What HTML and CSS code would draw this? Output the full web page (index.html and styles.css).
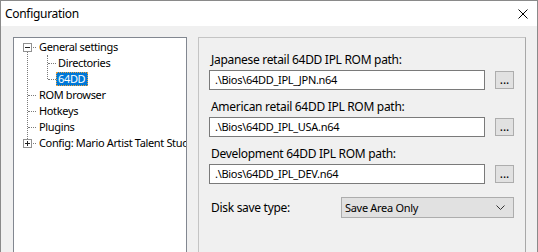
FILE: index.html
```html
<!DOCTYPE html>
<html>
<head>
<meta charset="utf-8">
<link rel="stylesheet" href="styles.css">
</head>
<body>
<div class="window">
  <div class="titlebar">
    <span class="title">Configuration</span>
    <svg class="close" width="10" height="10" viewBox="0 0 10 10"><path d="M0.5 0.5 L9.5 9.5 M9.5 0.5 L0.5 9.5" stroke="#000" stroke-width="1" fill="none"/></svg>
  </div>
  <div class="content">
    <div class="tree">
      <ul class="root">
        <li class="node">
          <div class="row"><span class="exp minus"></span><span class="label">General settings</span></div>
          <ul class="children">
            <li class="row child"><span class="label">Directories</span></li>
            <li class="row child last"><span class="label sel">64DD</span></li>
          </ul>
        </li>
        <li class="row"><span class="label">ROM browser</span></li>
        <li class="row"><span class="label">Hotkeys</span></li>
        <li class="row"><span class="label">Plugins</span></li>
        <li class="row"><span class="exp plus"></span><span class="label">Config: Mario Artist Talent Studio</span></li>
      </ul>
    </div>
    <div class="panel">
      <div class="group">
        <div class="flabel">Japanese retail 64DD IPL ROM path:</div>
        <div class="field"><div class="input">.\Bios\64DD_IPL_JPN.n64</div><div class="btn">...</div></div>
      </div>
      <div class="group">
        <div class="flabel">American retail 64DD IPL ROM path:</div>
        <div class="field"><div class="input">.\Bios\64DD_IPL_USA.n64</div><div class="btn">...</div></div>
      </div>
      <div class="group">
        <div class="flabel">Development 64DD IPL ROM path:</div>
        <div class="field"><div class="input">.\Bios\64DD_IPL_DEV.n64</div><div class="btn">...</div></div>
      </div>
      <div class="comborow">
        <div class="clabel">Disk save type:</div>
        <div class="combo"><span>Save Area Only</span><svg width="9" height="5" viewBox="0 0 9 5"><path d="M0.5 0.5 L4.5 4.5 L8.5 0.5" stroke="#333" stroke-width="1" fill="none"/></svg></div>
      </div>
    </div>
  </div>
</div>
</body>
</html>
```
FILE: styles.css
```css
html, body {
  margin: 0;
  padding: 0;
  background: #f0f0f0;
}
body {
  font-family: "Noto Sans", sans-serif;
  font-size: 12px;
  letter-spacing: -0.3px;
  color: #000;
}
.window {
  width: 538px;
  height: 252px;
  box-sizing: border-box;
  border: 1px solid #8a8a8a;
  border-bottom: none;
  background: #f0f0f0;
  display: flex;
  flex-direction: column;
  overflow: hidden;
}
.titlebar {
  height: 25px;
  flex: none;
  background: #fff;
  display: flex;
  align-items: center;
  justify-content: space-between;
  padding: 0 9px 0 4px;
}
.title {
  font-size: 12px;
  line-height: 16px;
}
.close { display: block; }
.content {
  flex: 1;
  display: flex;
  gap: 11px;
  padding: 11px 11px 0 12px;
  min-height: 0;
}
.tree {
  width: 174px;
  flex: none;
  box-sizing: border-box;
  background: #fff;
  border: 1px solid #828790;
  border-bottom: none;
  padding-top: 1px;
  overflow: hidden;
  font-size: 11px;
  letter-spacing: -0.35px;
}
.tree ul {
  list-style: none;
  margin: 0;
  padding: 0;
}
.root {
  position: relative;
}
.root::before {
  content: "";
  position: absolute;
  left: 13px;
  top: 8px;
  bottom: 8px;
  border-left: 1px dotted #7a7a7a;
}
.row {
  position: relative;
  height: 16px;
  display: flex;
  align-items: center;
  padding-left: 23px;
  white-space: nowrap;
}
.row::before {
  content: "";
  position: absolute;
  left: 14px;
  top: 8px;
  width: 8px;
  border-top: 1px dotted #7a7a7a;
}
.children {
  position: relative;
}
.children::before {
  content: "";
  position: absolute;
  left: 33px;
  top: 0;
  height: 24px;
  border-left: 1px dotted #7a7a7a;
}
.row.child {
  padding-left: 42px;
}
.row.child::before {
  left: 34px;
  width: 8px;
}
.label {
  display: inline-block;
  height: 14px;
  line-height: 14px;
  padding: 0 2px;
  position: relative;
  z-index: 1;
}
.label.sel {
  background: #0078d7;
  color: #fff;
  outline: 1px dotted #e8a040;
  outline-offset: -1px;
  height: 14px;
  line-height: 14px;
  padding: 0 3px 0 2px;
}
.exp {
  position: absolute;
  left: 9px;
  top: 4px;
  width: 9px;
  height: 9px;
  box-sizing: border-box;
  border: 1px solid #919191;
  background: #fff;
  z-index: 2;
}
.exp::before {
  content: "";
  position: absolute;
  left: 1px;
  top: 3px;
  width: 5px;
  height: 1px;
  background: #222;
}
.exp.plus::after {
  content: "";
  position: absolute;
  left: 3px;
  top: 1px;
  width: 1px;
  height: 5px;
  background: #222;
}
.panel {
  width: 328px;
  flex: none;
  box-sizing: border-box;
  border: 1px solid #c4c4c4;
  border-right-color: #a8a8a8;
  border-bottom: none;
  padding: 14px 11px 0 10px;
}
.group {
  margin-bottom: 9px;
}
.flabel {
  height: 16px;
  line-height: 16px;
  margin: 0 0 2px 2px;
  white-space: nowrap;
}
.field {
  display: flex;
  gap: 10px;
  align-items: flex-start;
}
.input {
  flex: 1;
  height: 20px;
  box-sizing: border-box;
  border: 1px solid #7a7a7a;
  background: #fff;
  padding-left: 5px;
  line-height: 18px;
  white-space: nowrap;
  font-size: 11px;
}
.btn {
  width: 19px;
  height: 18px;
  margin-top: 1px;
  box-sizing: border-box;
  border: 1px solid #adadad;
  background: #e1e1e1;
  text-align: center;
  line-height: 16px;
  font-size: 12px;
  letter-spacing: 0;
}
.comborow {
  display: flex;
  align-items: center;
  margin-top: 13px;
}
.clabel {
  width: 130px;
  margin-left: 2px;
  line-height: 16px;
}
.combo {
  width: 173px;
  height: 21px;
  box-sizing: border-box;
  border: 1px solid #adadad;
  background: #e1e1e1;
  display: flex;
  align-items: center;
  justify-content: space-between;
  padding: 0 8px 0 3px;
  font-size: 11px;
}
.combo svg { display: block; }
```
